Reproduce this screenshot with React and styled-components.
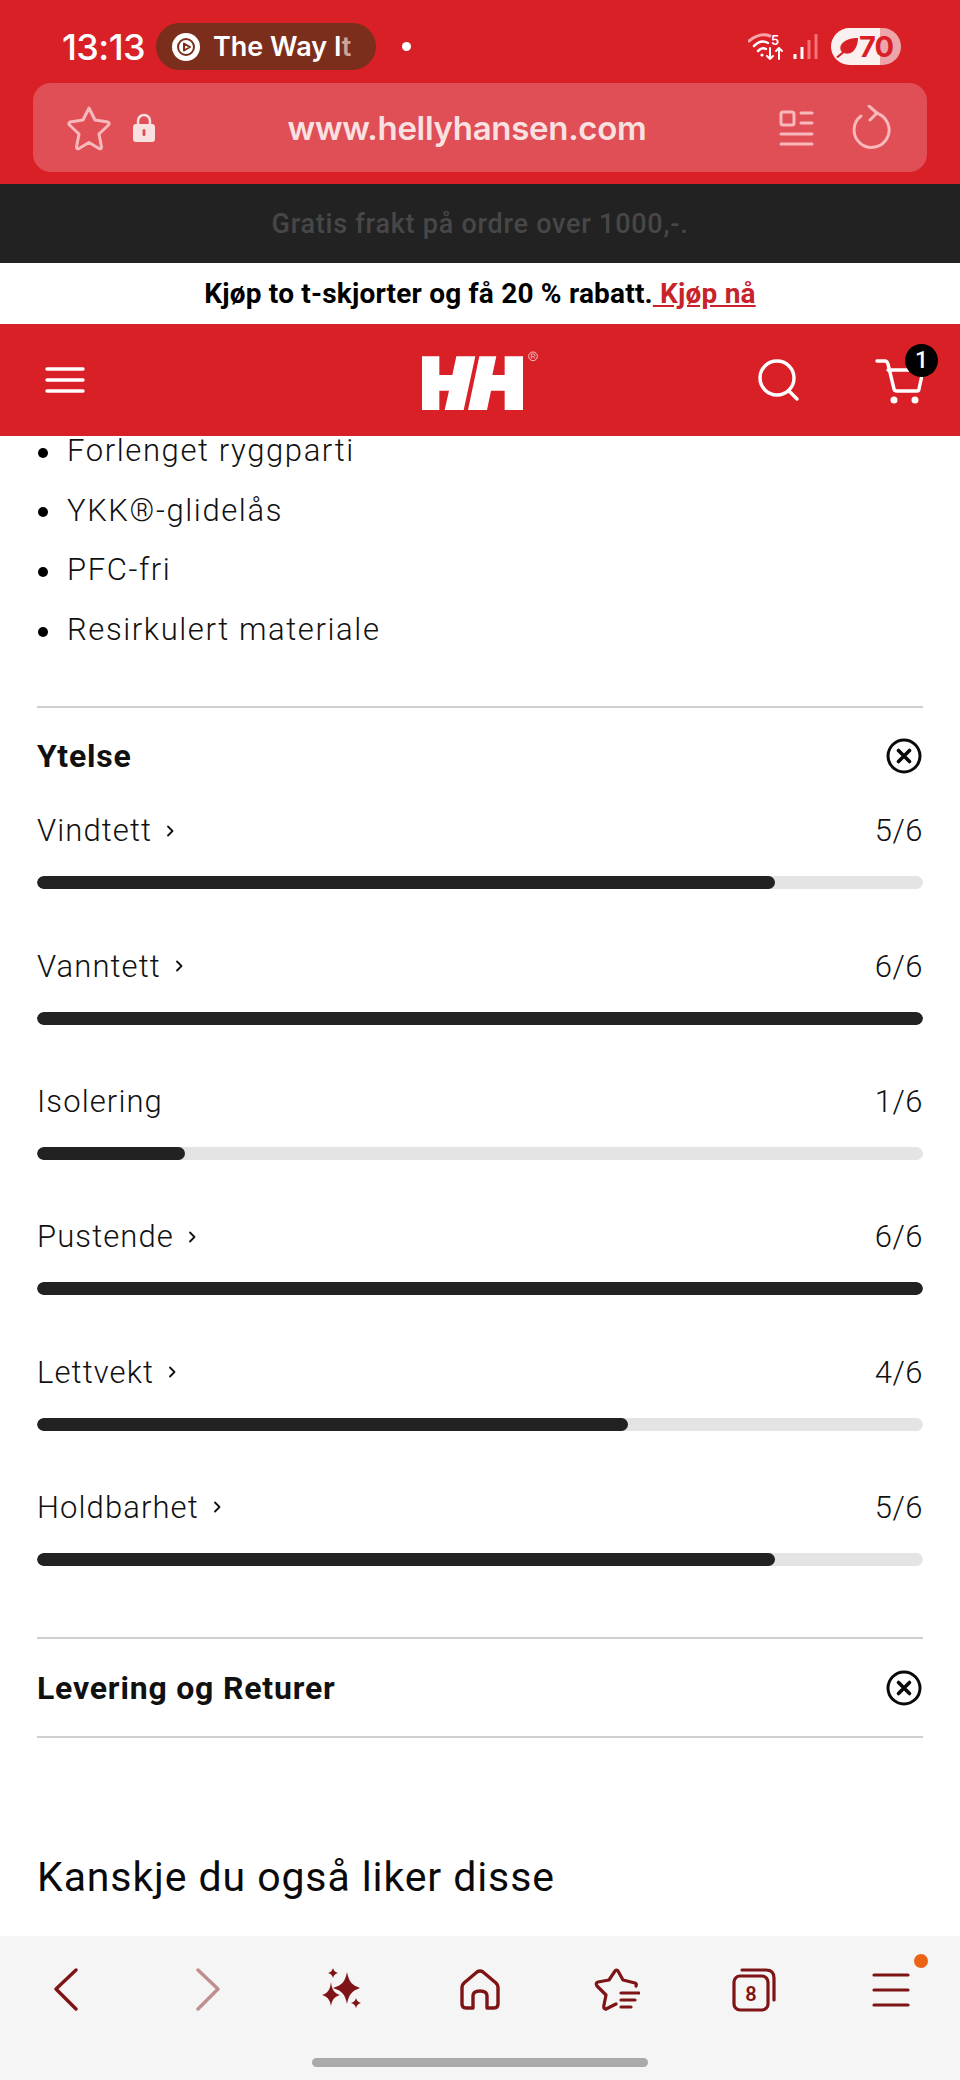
import React from 'react';
import styled, { createGlobalStyle } from 'styled-components';

const Global = createGlobalStyle`
  html, body { margin: 0; padding: 0; background: #fff; }
  * { box-sizing: border-box; }
`;

const Page = styled.div`
  width: 960px;
  height: 2080px;
  display: flex;
  flex-direction: column;
  overflow: hidden;
  font-family: Roboto, "Liberation Sans", sans-serif;
  color: #111;
`;

const Chrome = styled.div`
  height: 184px;
  background: #d92027;
  padding: 23px 33px 12px;
  display: flex;
  flex-direction: column;
  gap: 13px;
`;

const StatusBar = styled.div`
  height: 47px;
  display: flex;
  align-items: center;
  color: #fff;
  padding: 0 26px 0 29px;
`;

const Clock = styled.span`
  font: 500 36px Inter, sans-serif;
  letter-spacing: -0.6px;
  width: 94px;
`;

const NowPlaying = styled.div`
  width: 220px;
  height: 47px;
  border-radius: 24px;
  background: #7c2e1c;
  display: flex;
  align-items: center;
  gap: 13px;
  padding-left: 16px;
  font: 600 27px Inter, sans-serif;
`;

const Fade = styled.span`
  color: #c9a59a;
`;

const Dot = styled.span`
  width: 9px;
  height: 9px;
  border-radius: 50%;
  background: #fff;
  margin-left: 26px;
`;

const StatusRight = styled.div`
  margin-left: auto;
  display: flex;
  align-items: center;
  gap: 8px;
`;

const Battery = styled.div`
  width: 70px;
  height: 37px;
  margin-left: 5px;
  border-radius: 19px;
  background: linear-gradient(90deg, #fbf0f0 0 70%, #eca6aa 70%);
  color: #d92027;
  display: flex;
  align-items: center;
  padding-left: 4px;
  font: 700 29px Inter, sans-serif;
  letter-spacing: -1px;
`;

const UrlBar = styled.div`
  height: 89px;
  border-radius: 18px;
  background: #e04e56;
  display: flex;
  align-items: center;
  padding: 0 36px 0 34px;
  color: #f9e1e2;
`;

const UrlText = styled.div`
  flex: 1;
  text-align: center;
  font: 600 33px Inter, sans-serif;
  letter-spacing: -0.3px;
`;

const Notice = styled.div`
  height: 79px;
  background: #222;
  color: #474747;
  display: flex;
  align-items: center;
  justify-content: center;
  font: 500 27px Roboto, sans-serif;
  letter-spacing: 0.75px;
`;

const Promo = styled.div`
  height: 61px;
  background: #fff;
  display: flex;
  align-items: center;
  justify-content: center;
  font: 700 28px Roboto, sans-serif;
  letter-spacing: 0.2px;
  color: #000;
  white-space: pre;
`;

const PromoLink = styled.span`
  color: #c8232b;
  text-decoration: underline;
`;

const Header = styled.div`
  height: 112px;
  background: #d92027;
  display: grid;
  grid-template-columns: 1fr auto 1fr;
  align-items: center;
  padding: 0 35px 0 45px;
`;

const HeaderRight = styled.div`
  display: flex;
  justify-content: flex-end;
  align-items: center;
  gap: 75px;
`;

const CartWrap = styled.div`
  position: relative;
  width: 50px;
  height: 44px;
`;

const CartBadge = styled.span`
  position: absolute;
  top: -14px;
  right: -13px;
  width: 33px;
  height: 33px;
  border-radius: 50%;
  background: #000;
  color: #fff;
  font: 500 23px Roboto, sans-serif;
  display: flex;
  align-items: center;
  justify-content: center;
`;

const Content = styled.main`
  flex: 1;
  min-height: 0;
  overflow: hidden;
  padding: 0 37px;
`;

const Features = styled.ul`
  list-style: none;
  margin: -15px 0 47px;
  padding: 0;
`;

const Feature = styled.li`
  height: 59.6px;
  display: flex;
  align-items: center;
  gap: 19px;
  padding-left: 1px;
  font-size: 31px;
  font-weight: 300;
  letter-spacing: 1.6px;

  &::before {
    content: '';
    width: 10px;
    height: 10px;
    border-radius: 50%;
    background: #000;
    margin-top: 4px;
  }
`;

const Section = styled.section`
  border-top: 2px solid #cfd0d4;
`;

const SectionHead = styled.div`
  height: ${({ $h }) => $h}px;
  display: flex;
  align-items: center;
  justify-content: space-between;
  font-size: 32px;
  font-weight: 700;
  letter-spacing: 0.8px;
`;

const Ratings = styled.div`
  margin-bottom: 21px;
`;

const Rating = styled.div`
  height: 135.3px;
`;

const RatingText = styled.div`
  height: 50px;
  padding-top: 3px;
  display: flex;
  justify-content: space-between;
  align-items: center;
  font-size: 31px;
  font-weight: 300;
  letter-spacing: 1.1px;
`;

const RatingName = styled.span`
  display: flex;
  align-items: center;
  gap: 14px;
`;

const RatingScore = styled.span`
  letter-spacing: 0.5px;
`;

const Track = styled.div`
  height: 13px;
  margin-top: 22px;
  border-radius: 7px;
  background: #e4e4e4;
  overflow: hidden;
`;

const Fill = styled.div`
  height: 100%;
  border-radius: 7px;
  background: #222;
`;

const Related = styled.h2`
  margin: 115px 0 0;
  font-size: 41px;
  font-weight: 400;
  letter-spacing: 0.9px;
  color: #0a0a0a;
`;

const BottomBar = styled.nav`
  height: 144px;
  background: #f5f5f5;
  display: flex;
  flex-direction: column;
  align-items: center;
  padding-top: 32px;
`;

const BottomIcons = styled.div`
  width: 100%;
  height: 44px;
  display: grid;
  grid-template-columns: repeat(7, 1fr);
`;

const BottomItem = styled.div`
  position: relative;
  display: flex;
  align-items: center;
  justify-content: center;
  color: #7f1416;
  padding-left: ${({ $right }) => $right || 0}px;
  padding-right: ${({ $left }) => $left || 0}px;
`;

const MenuDot = styled.span`
  position: absolute;
  top: -14px;
  right: 32px;
  width: 14px;
  height: 14px;
  border-radius: 50%;
  background: #ec6313;
`;

const HomeIndicator = styled.div`
  width: 336px;
  height: 9px;
  margin-top: 46px;
  border-radius: 5px;
  background: #aaa;
`;

const Ico = ({ w, h, vb, children, sw = 2, ...rest }) => (
  <svg width={w} height={h} viewBox={vb || `0 0 ${w} ${h}`} fill="none" stroke="currentColor" strokeWidth={sw} strokeLinecap="round" strokeLinejoin="round" {...rest}>
    {children}
  </svg>
);

const STAR = 'M22 3 L28 15 L41 17 Q43 18 41.5 20 L32 29 L34.5 42 Q34.5 44.5 32 43.5 L22 37.5 L12 43.5 Q9.5 44.5 9.5 42 L12 29 L2.5 20 Q1 18 3 17 L16 15 Z';

const MusicGlyph = () => (
  <Ico w={28} h={28} sw={2}>
    <circle cx="14" cy="14" r="14" fill="#fff" stroke="none" />
    <circle cx="14" cy="14" r="8" stroke="#7c2e1c" />
    <path d="M12 10.5 L18 14 L12 17.5 Z" stroke="#7c2e1c" fill="none" />
  </Ico>
);

const WifiIcon = () => (
  <Ico w={36} h={30}>
    <path d="M1 9 Q12 0 22 4" stroke="#f7a5a8" strokeWidth="3" />
    <path d="M6 14 Q13 7 20 11" stroke="#fff" strokeWidth="2.5" />
    <path d="M10 19 Q14 15 18 17" stroke="#fff" strokeWidth="2.5" />
    <circle cx="14" cy="23" r="1.6" fill="#fff" stroke="none" />
    <text x="23" y="13" fill="#fff" stroke="none" fontSize="13" fontFamily="Inter" fontWeight="600">5</text>
    <path d="M22 16 V27 M19 24 L22 27 L25 24" stroke="#fff" strokeWidth="2" />
    <path d="M31 27 V16 M28 19 L31 16 L34 19" stroke="#fff" strokeWidth="2" />
  </Ico>
);

const SignalIcon = () => (
  <Ico w={26} h={27} sw={3} strokeLinecap="butt">
    <path d="M3 26 V21" stroke="#fff" />
    <path d="M10 26 V14" stroke="#fff" />
    <path d="M17 26 V7" stroke="#f67378" />
    <path d="M24 26 V1" stroke="#f67378" />
  </Ico>
);

const LeafIcon = () => (
  <svg width="24" height="24" viewBox="0 0 24 24" style={{ flex: 'none' }}>
    <path d="M1 22 L7 17 C2 11 9 3 23 3 C23 13 17 21 9 18 L3 23 Z" fill="#d92027" />
  </svg>
);

const LockIcon = () => (
  <svg width="22" height="29" viewBox="0 0 22 29" style={{ flex: 'none', marginLeft: 22 }}>
    <path d="M5 12 V8 a6 6 0 0 1 12 0 V12" fill="none" stroke="#f9e1e2" strokeWidth="2.5" />
    <rect y="11" width="22" height="18" rx="3" fill="#f9e1e2" />
    <rect x="9.5" y="16" width="3" height="7" rx="1.5" fill="#e04e56" />
  </svg>
);

const ReaderIcon = () => (
  <Ico w={36} h={36} sw={3} style={{ color: '#f7b9bb', flex: 'none', marginRight: 36 }}>
    <rect x="2" y="2" width="13" height="13" rx="2" />
    <path d="M22 3 H33 M22 13 H33 M2 24 H33 M2 34 H33" />
  </Ico>
);

const ReloadIcon = () => (
  <Ico w={40} h={46} sw={3} style={{ color: '#f7b9bb', flex: 'none' }}>
    <path d="M25 8 A17.5 17.5 0 1 1 10 11" />
    <path d="M18 1 L26 8 L19 15" />
  </Ico>
);

const Burger = () => (
  <Ico w={40} h={28} sw={3.4} style={{ color: '#fff' }}>
    <path d="M2 3 H38 M2 14 H38 M2 25 H38" />
  </Ico>
);

// coordinates follow the 3x crop of the logo, hence the odd viewBox
const HHLogo = () => (
  <svg width="117" height="60" viewBox="65 28 351 180" style={{ display: 'block', marginRight: 10 }}>
    <path d="M65 47 H117 V103 H156 L168 47 H225 L190 208 H133 L146 150 H117 V208 H65 Z" fill="#fff" />
    <path d="M368 47 H313 V103 H276 L288 47 H237 L203 208 H260 L272 150 H313 V208 H368 Z" fill="#fff" />
    <circle cx="398" cy="47" r="13" fill="none" stroke="#f7c4c6" strokeWidth="3" />
    <path d="M393 54 V40 H400 Q404 40 404 44 Q404 48 399 48 H393 M399 48 L404 54" fill="none" stroke="#f7c4c6" strokeWidth="2.6" />
  </svg>
);

const SearchIcon = () => (
  <Ico w={42} h={42} sw={3.4} style={{ color: '#fff' }}>
    <circle cx="19" cy="19" r="17" />
    <path d="M31 32 L39 40" />
  </Ico>
);

const CartIcon = () => (
  <Ico w={48} h={46} sw={3.4} style={{ color: '#fff', display: 'block' }}>
    <path d="M2 3 H10 Q12 3 13 6 L19 31 Q19.5 33 22 33 H42 Q44 33 44 31 L47 17 M13 12 H34" />
    <circle cx="19" cy="42" r="3.5" fill="#fff" stroke="none" />
    <circle cx="40" cy="42" r="3.5" fill="#fff" stroke="none" />
  </Ico>
);

const CloseCircle = () => (
  <Ico w={36} h={36} sw={3} style={{ color: '#0a0a0a', flex: 'none', marginRight: 1 }}>
    <circle cx="18" cy="18" r="16" />
    <path d="M12.5 12.5 L23.5 23.5 M23.5 12.5 L12.5 23.5" strokeWidth="3.6" />
  </Ico>
);

const Chevron = () => (
  <Ico w={8} h={14} sw={1.8}>
    <path d="M2 2.5 L6.5 7 L2 11.5" />
  </Ico>
);

const BackIcon = () => (
  <Ico w={26} h={44} sw={3.4}>
    <path d="M23 2 L3 21 L23 41" />
  </Ico>
);

const ForwardIcon = () => (
  <Ico w={26} h={44} sw={3.4} style={{ opacity: 0.45 }}>
    <path d="M3 2 L23 21 L3 41" />
  </Ico>
);

const Sparkles = () => (
  <svg width="42" height="44" viewBox="0 0 42 44" fill="currentColor">
    <path d="M25 4 C27 14 30 17 38 20 C30 23 27 26 25 36 C23 26 20 23 11 20 C20 17 23 14 25 4 Z" />
    <path d="M9 14 C10 22 12 25 18 27 C12 29 10 32 9 38 C8 32 6 29 0 27 C6 25 8 22 9 14 Z" />
    <path d="M11 0 C12 3 13 4 16 5 C13 6 12 7 11 10 C10 7 9 6 6 5 C9 4 10 3 11 0 Z" />
    <path d="M34 30 C35 33 36 34 39 35 C36 36 35 37 34 40 C33 37 32 36 29 35 C32 34 33 33 34 30 Z" />
  </svg>
);

const HomeIcon = () => (
  <Ico w={40} h={42} sw={3.4}>
    <path d="M13 39 H6 Q2 39 2 35 V18 Q2 16 4 14 L17 3 Q20 1 23 3 L36 14 Q38 16 38 18 V35 Q38 39 34 39 H27 V27 Q27 22 20 22 Q13 22 13 27 Z" />
  </Ico>
);

const FavIcon = () => (
  <Ico w={46} h={44} sw={3.2}>
    <path d="M12 41 Q9 41 10 37 L12 27 L3 18 Q1 15 4 14 L15 12 L21 3 Q22 1 24 3 L29 12 L41 15 Q43 16 42 18" />
    <path d="M12 41 L22 36 M27 25 H45 M27 32 H41 M27 39 H37" />
  </Ico>
);

const TabsIcon = () => (
  <Ico w={44} h={44} sw={3.2}>
    <rect x="2" y="8" width="34" height="34" rx="6" />
    <path d="M10 2 H34 Q42 2 42 10 V32" />
    <text x="19" y="33" textAnchor="middle" fontSize="20" fontWeight="600" fontFamily="Roboto" fill="currentColor" stroke="none">8</text>
  </Ico>
);

const MenuIcon = () => (
  <Ico w={38} h={36} sw={3.2}>
    <path d="M2 3 H36 M2 18 H36 M2 33 H36" />
  </Ico>
);

const features = ['Forlenget ryggparti', 'YKK®-glidelås', 'PFC-fri', 'Resirkulert materiale'];

const ratings = [
  { name: 'Vindtett', score: 5, link: true },
  { name: 'Vanntett', score: 6, link: true },
  { name: 'Isolering', score: 1, link: false },
  { name: 'Pustende', score: 6, link: true },
  { name: 'Lettvekt', score: 4, link: true },
  { name: 'Holdbarhet', score: 5, link: true },
];

const App = () => (
  <Page>
    <Global />
    <Chrome>
      <StatusBar>
        <Clock>13:13</Clock>
        <NowPlaying>
          <MusicGlyph />
          <span>The Way I<Fade>t</Fade></span>
        </NowPlaying>
        <Dot />
        <StatusRight>
          <WifiIcon />
          <SignalIcon />
          <Battery><LeafIcon />70</Battery>
        </StatusRight>
      </StatusBar>
      <UrlBar>
        <Ico w={44} h={46} sw={3} style={{ color: '#f7b9bb', flex: 'none' }}>
          <path d={STAR} />
        </Ico>
        <LockIcon />
        <UrlText>www.hellyhansen.com</UrlText>
        <ReaderIcon />
        <ReloadIcon />
      </UrlBar>
    </Chrome>
    <Notice>Gratis frakt på ordre over 1000,-.</Notice>
    <Promo>Kjøp to t-skjorter og få 20 % rabatt.<PromoLink> Kjøp nå</PromoLink></Promo>
    <Header>
      <Burger />
      <HHLogo />
      <HeaderRight>
        <SearchIcon />
        <CartWrap>
          <CartIcon />
          <CartBadge>1</CartBadge>
        </CartWrap>
      </HeaderRight>
    </Header>
    <Content>
      <Features>
        {features.map(f => <Feature key={f}>{f}</Feature>)}
      </Features>
      <Section>
        <SectionHead $h={96}>Ytelse<CloseCircle /></SectionHead>
        <Ratings>
          {ratings.map(r => (
            <Rating key={r.name}>
              <RatingText>
                <RatingName>{r.name}{r.link && <Chevron />}</RatingName>
                <RatingScore>{r.score}/6</RatingScore>
              </RatingText>
              <Track>
                <Fill style={{ width: `${(r.score / 6) * 100}%` }} />
              </Track>
            </Rating>
          ))}
        </Ratings>
      </Section>
      <Section>
        <SectionHead $h={97}>Levering og Returer<CloseCircle /></SectionHead>
      </Section>
      <Section />
      <Related>Kanskje du også liker disse</Related>
    </Content>
    <BottomBar>
      <BottomIcons>
        <BottomItem $left={5}><BackIcon /></BottomItem>
        <BottomItem $right={5}><ForwardIcon /></BottomItem>
        <BottomItem><Sparkles /></BottomItem>
        <BottomItem><HomeIcon /></BottomItem>
        <BottomItem><FavIcon /></BottomItem>
        <BottomItem><TabsIcon /></BottomItem>
        <BottomItem><MenuIcon /><MenuDot /></BottomItem>
      </BottomIcons>
      <HomeIndicator />
    </BottomBar>
  </Page>
);

export default App;
